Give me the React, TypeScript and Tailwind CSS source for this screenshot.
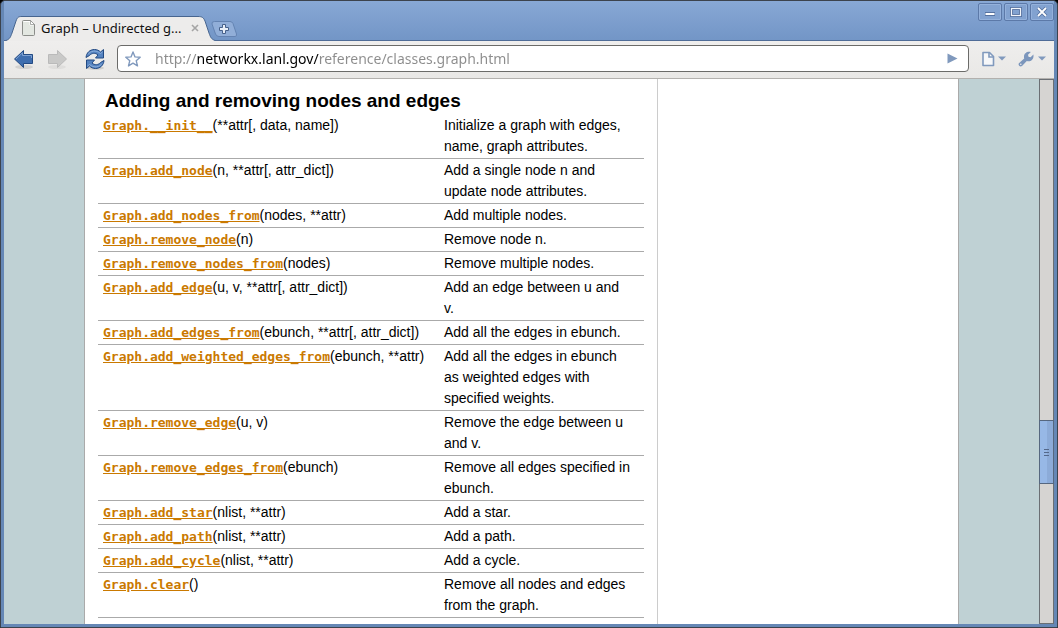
import React from "react";

type Entry = { name: string; args: string; text: string };

const entries: Entry[] = [
  { name: "Graph.__init__", args: "(**attr[, data, name])", text: "Initialize a graph with edges, name, graph attributes." },
  { name: "Graph.add_node", args: "(n, **attr[, attr_dict])", text: "Add a single node n and update node attributes." },
  { name: "Graph.add_nodes_from", args: "(nodes, **attr)", text: "Add multiple nodes." },
  { name: "Graph.remove_node", args: "(n)", text: "Remove node n." },
  { name: "Graph.remove_nodes_from", args: "(nodes)", text: "Remove multiple nodes." },
  { name: "Graph.add_edge", args: "(u, v, **attr[, attr_dict])", text: "Add an edge between u and v." },
  { name: "Graph.add_edges_from", args: "(ebunch, **attr[, attr_dict])", text: "Add all the edges in ebunch." },
  { name: "Graph.add_weighted_edges_from", args: "(ebunch, **attr)", text: "Add all the edges in ebunch as weighted edges with specified weights." },
  { name: "Graph.remove_edge", args: "(u, v)", text: "Remove the edge between u and v." },
  { name: "Graph.remove_edges_from", args: "(ebunch)", text: "Remove all edges specified in ebunch." },
  { name: "Graph.add_star", args: "(nlist, **attr)", text: "Add a star." },
  { name: "Graph.add_path", args: "(nlist, **attr)", text: "Add a path." },
  { name: "Graph.add_cycle", args: "(nlist, **attr)", text: "Add a cycle." },
  { name: "Graph.clear", args: "()", text: "Remove all nodes and edges from the graph." },
];

function WindowButton({ label, children }: { label: string; children: React.ReactNode }) {
  return (
    <button
      aria-label={label}
      className="flex h-[18px] w-6 items-center justify-center rounded-xs border border-[#5c79a8] bg-[#82a2d0] shadow-[inset_0_0_0_1px_#94b1db]"
    >
      <svg width="16" height="14" viewBox="0 0 16 14" fill="none" aria-hidden="true">
        {children}
      </svg>
    </button>
  );
}

function TabStrip() {
  return (
    <div className="flex h-10 items-end bg-linear-to-b from-[#88a8d5] to-[#7295c6] pl-[2px] shadow-[inset_0_-1px_0_#4f6c97]">
      <div className="relative h-[26px] w-[209px]">
        <svg className="absolute inset-0" width="209" height="26" viewBox="0 0 209 26" aria-hidden="true">
          <path
            d="M0 25.5C4 24 4.500 22 6 18L10 6C11.500 2 12.500 1.500 16 1.500H192C196 1.500 197.500 2.500 199 6L203 18C204.500 22 205 24 209 25.500V26H0Z"
            fill="#edeceb"
          />
          <path
            d="M0 25.5C4 24 4.500 22 6 18L10 6C11.500 2 12.500 1.500 16 1.500H192C196 1.500 197.500 2.500 199 6L203 18C204.500 22 205 24 209 25.500"
            fill="none"
            stroke="#47658f"
          />
        </svg>
        <div className="relative flex h-full items-center pr-[15px] pl-4">
          <svg width="13" height="16" viewBox="0 0 13 16" aria-hidden="true">
            <path d="M1.500.5H8.500L12.500 4.500V14.500Q12.500 15.500 11.500 15.500H1.500Q.5 15.500 .5 14.500V1.500Q.5.5 1.500.5Z" fill="#e3e7e1" stroke="#8b8d89" />
            <path d="M1.500 1.500H8V5H11.500" fill="none" stroke="#fff" />
            <path d="M8.500.5V4.500H12.500Z" fill="#fff" stroke="#8b8d89" strokeWidth=".7" />
          </svg>
          <span className="ml-[6px] flex-1 text-[13px] leading-4 whitespace-nowrap text-[#111]">Graph – Undirected g...</span>
          <button aria-label="Close tab" className="flex h-4 w-[10px] items-center justify-center">
            <svg width="8" height="8" viewBox="0 0 8 8" aria-hidden="true">
              <path d="M1 1L7 7M7 1L1 7" stroke="#a5a5a5" strokeWidth="1.600" />
            </svg>
          </button>
        </div>
      </div>
      <button aria-label="New tab" className="mb-1 -ml-1 h-4 w-[27px]">
        <svg width="27" height="16" viewBox="0 0 27 16" aria-hidden="true">
          <path d="M3.500.5H19Q21 .5 22 2.500L25.500 13Q26 15.500 24 15.500H8Q5.500 15.500 4.500 13L1 3Q.5.5 3.500.5Z" fill="#91aed8" stroke="#6483b2" />
          <path d="M11.500 3.500H14.500V6.500H17.500V9.500H14.500V12.500H11.500V9.500H8.500V6.500H11.500Z" fill="#e8eef7" stroke="#46618b" />
        </svg>
      </button>
    </div>
  );
}

function Caret() {
  return (
    <svg width="8" height="5" viewBox="0 0 8 5" aria-hidden="true">
      <path d="M0 .5H8L4 4.500Z" fill="#8099bd" />
    </svg>
  );
}

function Toolbar() {
  return (
    <div className="flex h-[38px] items-center border-b border-[#b3b1ae] bg-linear-to-b from-[#efeeed] to-[#e9e8e6] pr-2 pb-[2px] pl-[9px]">
      <button aria-label="Back" className="w-[22px]">
        <svg width="22" height="22" viewBox="0 0 22 22" aria-hidden="true">
          <ellipse cx="11" cy="19" rx="9" ry="2" fill="#000" opacity=".1" />
          <path d="M1.500 11L10.500 2.500V6.500H19.500V15.500H10.500V19.500Z" fill="#3f6eaf" stroke="#234a83" strokeLinejoin="round" />
          <path d="M3 11L9.500 4.800V7.500H18.500V10" fill="none" stroke="#7ea2d3" />
        </svg>
      </button>
      <button aria-label="Forward" disabled className="ml-[11px] w-[22px]">
        <svg width="22" height="22" viewBox="0 0 22 22" aria-hidden="true">
          <ellipse cx="11" cy="19" rx="9" ry="2" fill="#000" opacity=".05" />
          <path d="M20.500 11L11.500 2.500V6.500H2.500V15.500H11.500V19.500Z" fill="#c9c9c8" stroke="#bababa" strokeLinejoin="round" />
        </svg>
      </button>
      <button aria-label="Reload" className="ml-4 w-[22px]">
        <svg width="22" height="22" viewBox="0 0 22 22" aria-hidden="true">
          <ellipse cx="11" cy="20" rx="9" ry="1.800" fill="#000" opacity=".12" />
          <g fill="#5583c0" stroke="#234a83" strokeLinejoin="round">
            <path d="M2 9.500C2.500 4.500 6 1.500 10.500 1.500C13 1.500 15 2.500 16.500 4L19.500 1.500V10H11.500L14 7C11.500 4.500 7.500 5 5.500 7.500Z" />
            <path d="M20 12.500C19.500 17.500 16 20.500 11.500 20.500C9 20.500 7 19.500 5.500 18L2.500 20.500V12H10.500L8 15C10.500 17.500 14.500 17 16.500 14.500Z" />
          </g>
          <path d="M4 6.500C6 3 12 1.500 16.500 5.500L18.500 4M18 15.500C16 19 10 20.500 5.500 16.500L3.500 18" fill="none" stroke="#9bbae2" strokeWidth=".8" />
        </svg>
      </button>
      <div className="ml-[11px] flex h-[27px] min-w-0 flex-1 items-center rounded-[4px] border border-[#6b6b69] bg-white pr-[10px] pl-[7px]">
        <button aria-label="Bookmark this page">
          <svg width="16" height="16" viewBox="0 0 16 16" aria-hidden="true">
            <path d="M8 1L10 5.900L15.200 6.300L11.200 9.700L12.500 14.900L8 12.100L3.500 14.900L4.800 9.700L.8 6.300L6 5.900Z" fill="#fff" stroke="#8099bd" strokeWidth="1.400" strokeLinejoin="round" />
          </svg>
        </button>
        <input
          type="text"
          aria-label="Address"
          defaultValue="http://networkx.lanl.gov/reference/classes.graph.html"
          className="ml-[14px] min-w-0 flex-1 bg-[linear-gradient(to_right,#8c8c8c_42px,#000_42px,#000_164px,#8c8c8c_164px)] bg-clip-text text-[14px] leading-5 text-transparent outline-none"
        />
        <button aria-label="Go">
          <svg width="11" height="11" viewBox="0 0 11 11" aria-hidden="true">
            <path d="M.5.5L10.500 5.500L.5 10.500Z" fill="#8099bd" />
          </svg>
        </button>
      </div>
      <button aria-label="Page menu" className="ml-3 flex items-center gap-[3px]">
        <svg width="14" height="16" viewBox="0 0 14 16" aria-hidden="true">
          <path d="M2 1.500H8.500L12.500 5.500V14.500H2Z" fill="#f6f7f9" stroke="#8099bd" strokeWidth="1.600" strokeLinejoin="round" />
          <path d="M8 1.500V6H12.500" fill="none" stroke="#8099bd" strokeWidth="1.600" />
        </svg>
        <Caret />
      </button>
      <button aria-label="Tools menu" className="ml-3 flex items-center gap-1">
        <svg width="16" height="16" viewBox="0 0 16 16" aria-hidden="true">
          <path d="M.9 12.200L6.200 7.400C5 3.200 8.500 0 12.800 1L10 3.800L10.500 5.800L12.600 6.300L15.400 3.600C16.200 8 13 11.200 8.800 10L4 15C2 16.300 -.3 14.200 .9 12.200Z" fill="#7c96bc" />
          <circle cx="2.800" cy="13.200" r=".8" fill="#edeceb" />
        </svg>
        <Caret />
      </button>
    </div>
  );
}

function Scrollbar() {
  return (
    <div className="flex w-[15px] flex-col border border-[#6b6f74] bg-[#d6d4d2]">
      <div className="flex-[340]" />
      <div className="-mx-px flex h-16 flex-col items-center justify-center gap-[2px] border border-[#56677f] bg-linear-to-r from-[#97b8e6] from-50% to-[#8cabd8] to-50%">
        <span className="h-px w-[5px] bg-[#54688a]" />
        <span className="h-px w-[5px] bg-[#54688a]" />
        <span className="h-px w-[5px] bg-[#54688a]" />
      </div>
      <div className="flex-[139]" />
    </div>
  );
}

export default function App() {
  return (
    <div className="h-screen bg-black font-['Noto_Sans',sans-serif]">
      <div className="relative flex h-full flex-col overflow-hidden rounded-t-[5px] border border-[#3c434d] bg-[#6587b5] px-[3px] pb-[3px]">
        <TabStrip />
        <div className="absolute top-[2px] right-[3px] flex gap-[2px]">
          <WindowButton label="Minimize">
            <path d="M3 9H13" stroke="#5672a0" strokeWidth="4" />
            <path d="M3.500 9H12.500" stroke="#fff" strokeWidth="2" />
          </WindowButton>
          <WindowButton label="Maximize">
            <rect x="3.500" y="3.500" width="9" height="7" stroke="#5672a0" strokeWidth="3" />
            <rect x="3.500" y="3.500" width="9" height="7" stroke="#f2f5fa" strokeWidth="1.200" />
          </WindowButton>
          <WindowButton label="Close">
            <path d="M4 3L12 11M12 3L4 11" stroke="#5672a0" strokeWidth="3.600" />
            <path d="M4 3L12 11M12 3L4 11" stroke="#fff" strokeWidth="1.800" />
          </WindowButton>
        </div>
        <Toolbar />
        <div className="flex min-h-0 flex-1">
          <div className="flex min-w-0 flex-1 overflow-hidden bg-[#bfd1d4] px-20">
            <div className="flex min-w-0 flex-1 border-x border-[#aaa] bg-white font-['Liberation_Sans',Arial,sans-serif]">
              <main className="w-[573px] shrink-0 border-r border-[#ccc] px-[13px] pt-[9px]">
                <h2 className="pl-[7px] text-[19px] leading-[26px] font-bold text-black">Adding and removing nodes and edges</h2>
                <table className="w-full table-fixed border-collapse text-[14px] leading-[21px] text-black">
                  <colgroup>
                    <col />
                    <col className="w-[205px]" />
                  </colgroup>
                  <tbody>
                    {entries.map((e) => (
                      <tr key={e.name} className="border-b border-[#aaa] align-top">
                        <td className="py-px pr-1 pl-[5px] whitespace-nowrap">
                          <a href="#" className="font-['DejaVu_Sans_Mono',monospace] text-[13px] leading-4 font-bold text-[#ca7900] underline">
                            {e.name}
                          </a>
                          {e.args}
                        </td>
                        <td className="py-px pr-3 pl-[5px]">{e.text}</td>
                      </tr>
                    ))}
                  </tbody>
                </table>
              </main>
            </div>
          </div>
          <Scrollbar />
        </div>
      </div>
    </div>
  );
}
